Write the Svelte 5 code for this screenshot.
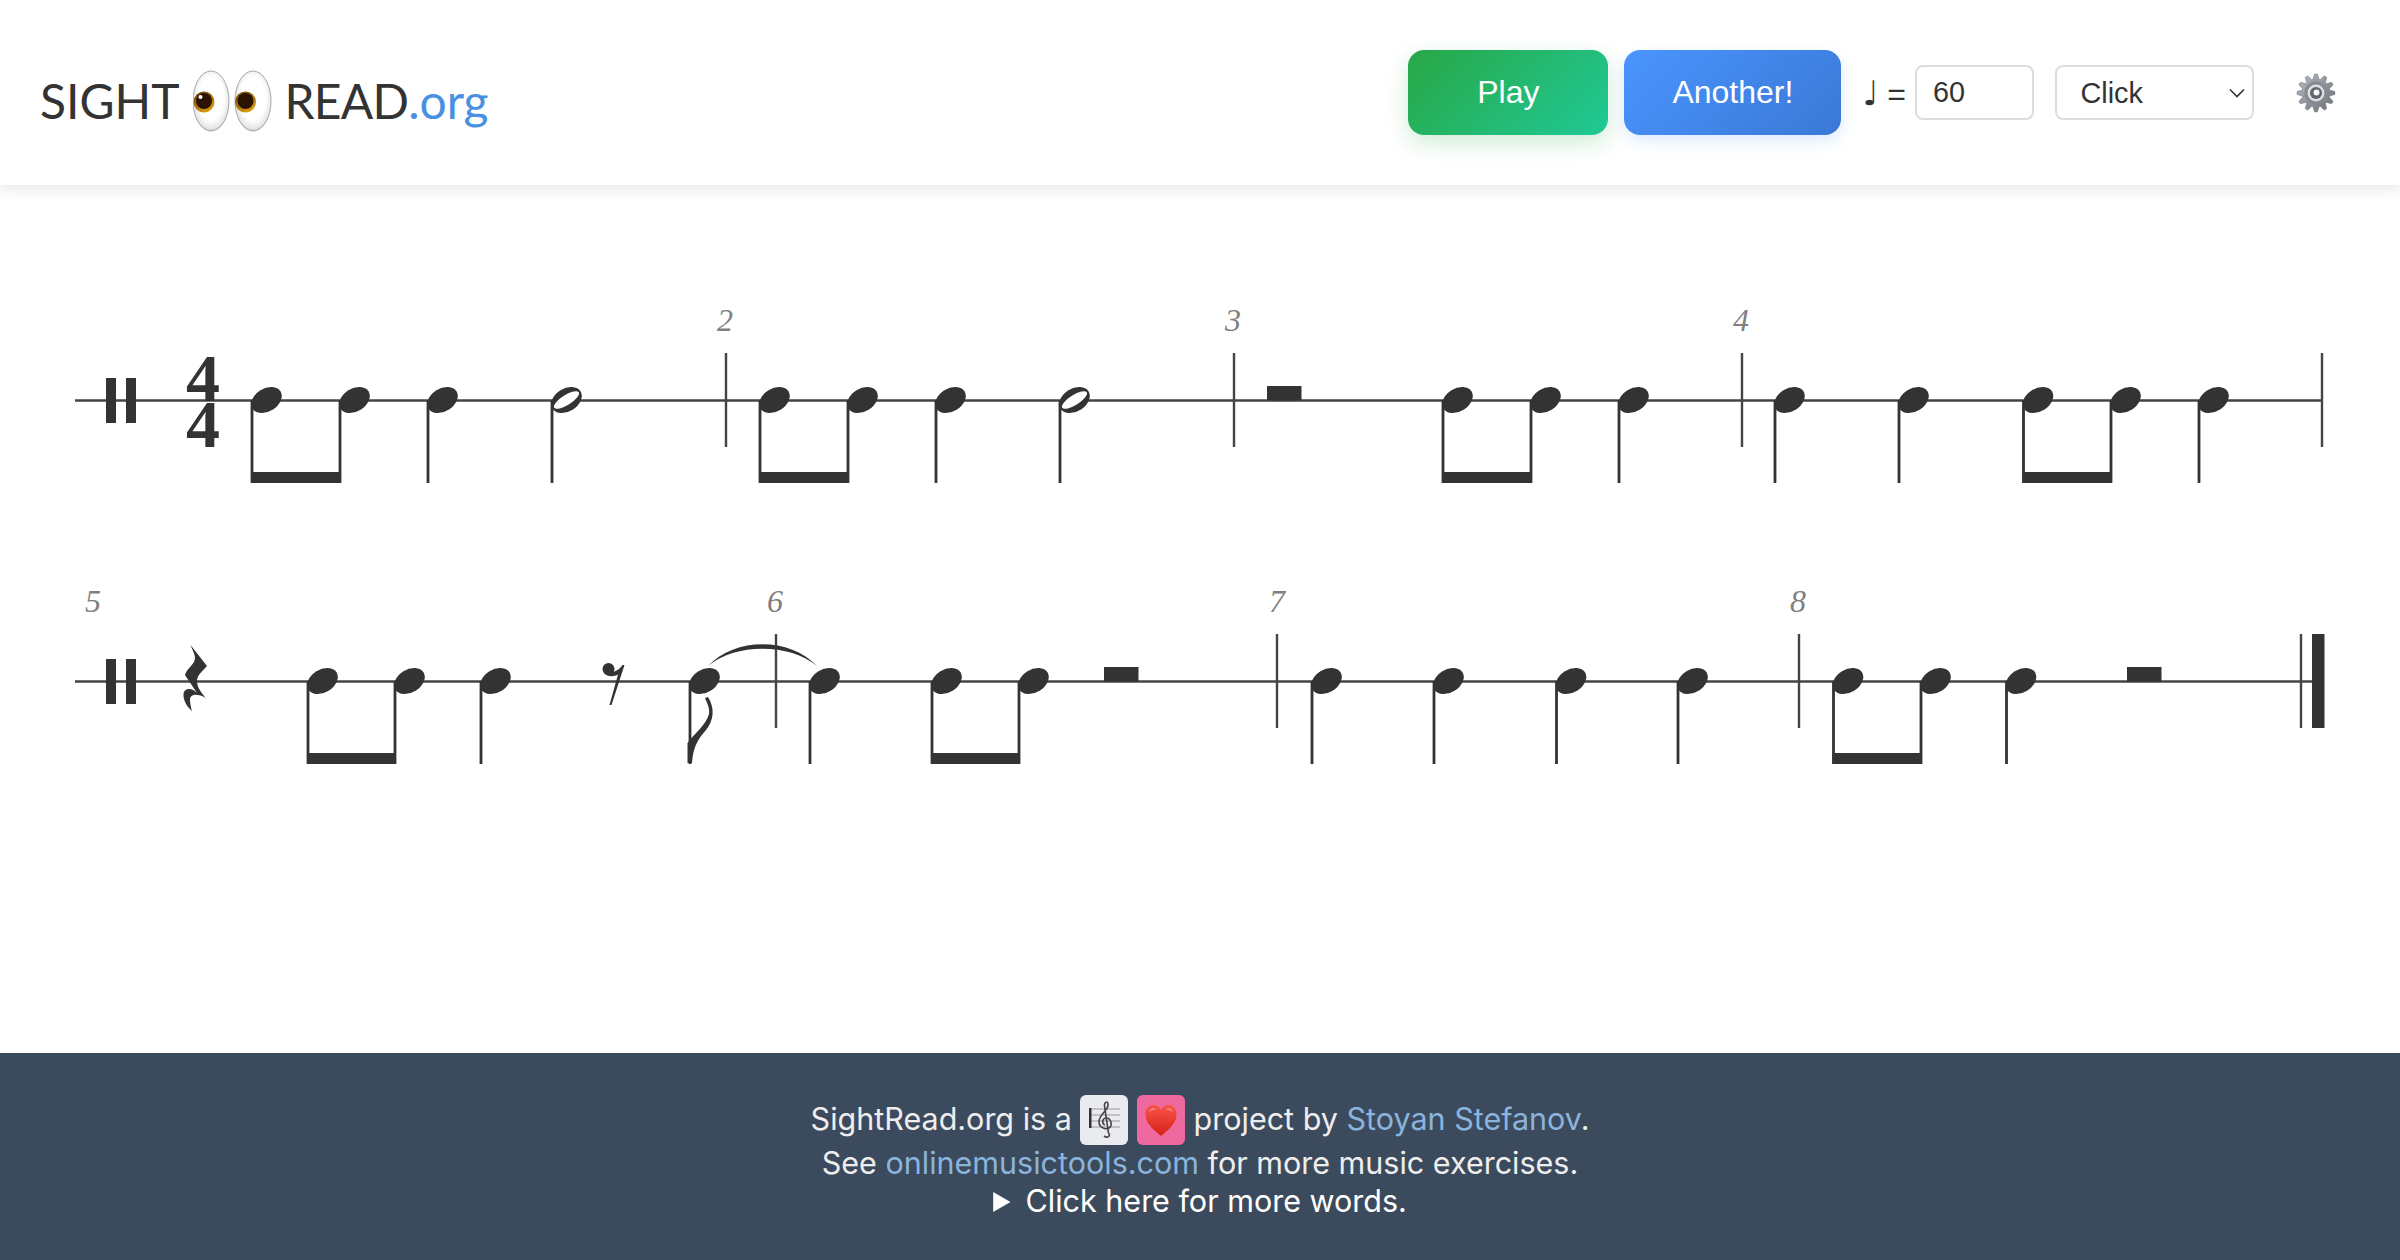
<script>
  const lineA = 400.5, lineB = 681.5;
  const STEM_BOTTOM = 82.5;
  const rows = [
    { y: lineA, end: 2322, start: 75,
      bars: [726, 1234, 1742, 2322],
      nums: [['2', 725], ['3', 1233], ['4', 1741]],
      stems: [252, 340, 428, 760, 848, 936, 1443, 1531, 1619, 1775, 1899, 2023.5, 2111, 2199],
      halves: [552, 1060],
      beams: [[252, 340], [760, 848], [1443, 1531], [2023.5, 2111]],
      rests: [1267] },
    { y: lineB, end: 2324, start: 75,
      bars: [776, 1277, 1799, 2301],
      nums: [['5', 93], ['6', 775], ['7', 1277], ['8', 1798]],
      stems: [308, 395, 481, 690, 810, 932, 1019, 1312, 1434, 1556.5, 1678, 1833.5, 1921, 2006.5],
      halves: [],
      beams: [[308, 395], [932, 1019], [1833.5, 1921]],
      rests: [1104, 2127] }
  ];

  function gearPath(cx, cy, outer, inner, teeth) {
    const step = (Math.PI * 2) / teeth;
    const pts = [];
    for (let i = 0; i < teeth; i++) {
      const a = i * step - Math.PI / 2;
      [[inner, -0.42], [outer, -0.14], [outer, 0.14], [inner, 0.42]].forEach(([r, k]) => {
        const t = a + k * step;
        pts.push((cx + r * Math.cos(t)).toFixed(2) + ' ' + (cy + r * Math.sin(t)).toFixed(2));
      });
    }
    return 'M' + pts.join('L') + 'Z';
  }
  const gear = gearPath(20, 20, 19, 14, 12);
</script>

<div class="page">
  <header class="top">
    <div class="logo">
      <span class="sight">SIGHT</span>
      <svg class="eyes" viewBox="0 0 80 62" width="80" height="62" aria-hidden="true">
        <defs>
          <radialGradient id="eyeWhite" cx="50%" cy="45%" r="60%">
            <stop offset="0.6" stop-color="#ffffff" />
            <stop offset="0.85" stop-color="#e6e6e6" />
            <stop offset="1" stop-color="#a0a0a0" />
          </radialGradient>
          <linearGradient id="iris" x1="0" y1="0" x2="0.6" y2="1">
            <stop offset="0" stop-color="#6a400c" />
            <stop offset="1" stop-color="#d99a10" />
          </linearGradient>
        </defs>
        <ellipse cx="18" cy="31" rx="18" ry="30" fill="url(#eyeWhite)" stroke="#a8a8a8" stroke-width="1" />
        <ellipse cx="60" cy="31" rx="18" ry="30" fill="url(#eyeWhite)" stroke="#a8a8a8" stroke-width="1" />
        <circle cx="11" cy="32" r="10.5" fill="url(#iris)" />
        <circle cx="11" cy="31" r="8" fill="#2c1200" />
        <circle cx="7.5" cy="27" r="2" fill="#fff" />
        <circle cx="52.5" cy="32" r="10.5" fill="url(#iris)" />
        <circle cx="52.5" cy="31" r="8" fill="#2c1200" />
      </svg>
      <span class="read">READ</span><span class="org">.org</span>
    </div>
    <div class="controls">
      <button class="btn play">Play</button>
      <button class="btn another">Another!</button>
      <span class="tempo"><span class="note">♩</span> =</span>
      <input class="bpm" type="text" value="60" />
      <div class="selwrap">
        <select class="sound"><option>Click</option></select>
        <svg class="chev" viewBox="0 0 16 10" width="16" height="10" aria-hidden="true"><path d="M1 1.5 L8 8.5 L15 1.5" fill="none" stroke="#333" stroke-width="1.6" /></svg>
      </div>
      <svg class="gear" viewBox="0 0 40 40" width="40" height="40" aria-hidden="true">
        <defs>
          <linearGradient id="gearG" x1="0" y1="0" x2="1" y2="1">
            <stop offset="0" stop-color="#b4bac1" />
            <stop offset="1" stop-color="#6b7077" />
          </linearGradient>
        </defs>
        <path d={gear} fill="url(#gearG)" stroke="#7d8289" stroke-width="0.6" stroke-linejoin="round" />
        <circle cx="20" cy="20" r="11.500" fill="#858a91" />
        <circle cx="20" cy="20" r="8.500" fill="#dcdfe2" />
        <circle cx="20" cy="20" r="6" fill="#5f6469" />
        <circle cx="20.500" cy="19.500" r="3" fill="#f4f6f7" />
      </svg>
    </div>
  </header>

  <main class="score">
    <svg class="sheet" viewBox="0 185 2400 868" width="2400" height="868">
      {#each rows as row}
        <line x1={row.start} x2={row.end} y1={row.y} y2={row.y} class="staff" />
        <rect x="106" y={row.y - 22.5} width="10" height="45" class="ink" />
        <rect x="126" y={row.y - 22.5} width="10" height="45" class="ink" />
        {#each row.bars as b}
          <line x1={b} x2={b} y1={row.y - 47.5} y2={row.y + 46.5} class="bar" />
        {/each}
        {#each row.nums as n}
          <text x={n[1]} y={row.y - 70} class="num">{n[0]}</text>
        {/each}
        {#each row.stems as s}
          <line x1={s} x2={s} y1={row.y} y2={row.y + STEM_BOTTOM} class="stem" />
          <ellipse cx={s + 14.5} cy={row.y - 0.5} rx="16.5" ry="11.5" class="ink" transform="rotate(-32 {s + 14.5} {row.y - 0.5})" />
        {/each}
        {#each row.halves as s}
          <line x1={s} x2={s} y1={row.y} y2={row.y + STEM_BOTTOM} class="stem" />
          <ellipse cx={s + 14.5} cy={row.y - 0.5} rx="16.5" ry="11.5" class="ink" transform="rotate(-32 {s + 14.5} {row.y - 0.5})" />
          <ellipse cx={s + 14.5} cy={row.y - 0.5} rx="14.5" ry="5" fill="#fff" transform="rotate(-32 {s + 14.5} {row.y - 0.5})" />
        {/each}
        {#each row.beams as b}
          <rect x={b[0] - 1} y={row.y + 71.5} width={b[1] - b[0] + 2} height="11" class="ink" />
        {/each}
        {#each row.rests as r}
          <rect x={r} y={row.y - 14.5} width="34.5" height="14.5" class="ink" />
        {/each}
      {/each}

      <text x="203" y="401" class="time">4</text>
      <text x="203" y="447" class="time">4</text>

      <path class="ink" d="M190.5 645 L207 666 C202 672 197 675 197 681 C197 688 202 693 205.5 698 C199 694 190 693 190 700 C190 703 191 708 192 711 C187 707 183 700 183.5 694 C184 688 192 687 197 693 L185 675 C187 668 195 664 195 658 C195 654 192 649 190.5 645 Z" />
      <circle class="ink" cx="608.5" cy="669" r="6" />
      <path class="ink" d="M624.5 665 L611.5 705 L609.5 705 L618 674.5 C613.5 677 606 677 603.5 672 L606 669 C609 673 616 674 622.5 665 Z" />
      <path class="ink" d="M708 666 C735 637 790 637 817 666 C790 643 735 643 708 666 Z" />
      <path class="ink" d="M705 698 L708 697 C715 708 714 720 706 730 C700 737 693 745 692 763 L687.5 763 L687.5 743 C695 733 706 725 709 714 C710 708 707 703 705 698 Z" />
      <rect x="2312" y="634" width="12.5" height="94" class="ink" />
    </svg>
  </main>

  <footer class="foot">
    <div class="l1">SightRead.org is a
      <svg class="tile" viewBox="0 0 48 50" width="48" height="50" aria-hidden="true">
        <rect width="48" height="50" rx="6" fill="#e9ebee" />
        <g stroke="#9a9a9a" stroke-width="1">
          <line x1="9" x2="40" y1="14" y2="14" />
          <line x1="9" x2="40" y1="20" y2="20" />
          <line x1="9" x2="40" y1="26" y2="26" />
          <line x1="9" x2="40" y1="32" y2="32" />
        </g>
        <rect x="9" y="13" width="2.5" height="20" fill="#333" />
        <path d="M24 41 C28 44 31 40 28.5 38 L24.5 11 C24 7 28 5 28 10 C28.5 15 19 19 19 27 C19 32 25 35 29 33 C33 31 31 23 26.5 23 C22 23 21.5 29 25 30" fill="none" stroke="#444" stroke-width="1.6" />
      </svg>
      <svg class="tile" viewBox="0 0 48 50" width="48" height="50" aria-hidden="true">
        <defs>
          <linearGradient id="heartG" x1="0" y1="0" x2="0" y2="1">
            <stop offset="0" stop-color="#f6564a" />
            <stop offset="1" stop-color="#d81f16" />
          </linearGradient>
        </defs>
        <rect width="48" height="50" rx="6" fill="#ee6a9e" />
        <path d="M24 41 C14 33 8.500 27 8.500 19.500 C8.500 13 12.500 10 16.500 10 C20 10 22.500 12 24 14.500 C25.500 12 28 10 31.500 10 C35.500 10 39.500 13 39.500 19.500 C39.500 27 34 33 24 41 Z" fill="url(#heartG)" />
        <path d="M12 17 C13 13.500 17 12.500 20 14.500 C16.500 14 14 15 12 17 Z M28 14.500 C31 12.500 35 13.500 36 17 C34 15 31.500 14 28 14.500 Z" fill="#ffb0a8" />
      </svg>
      project by <a href="#top">Stoyan Stefanov</a>.
    </div>
    <div class="l2">See <a href="#top">onlinemusictools.com</a> for more music exercises.</div>
    <details class="more"><summary>Click here for more words.</summary></details>
  </footer>
</div>

<style>
  :global(body) { margin: 0; background: #fff; }
  .page {
    min-height: 1260px;
    display: flex;
    flex-direction: column;
    font-family: "Liberation Sans", Arial, sans-serif;
    color: #333;
  }
  .top {
    height: 185px;
    box-sizing: border-box;
    display: flex;
    align-items: center;
    justify-content: space-between;
    padding: 0 64px 0 40px;
    background: #fff;
    box-shadow: 0 4px 14px rgba(0, 0, 0, 0.1);
    position: relative;
    z-index: 1;
  }
  .logo {
    display: flex;
    align-items: baseline;
    box-sizing: border-box;
    height: 62px;
    padding-top: 7px;
    margin-top: 17px;
    font-family: Lato, sans-serif;
    font-size: 48px;
    color: #333;
    line-height: 1;
  }
  .eyes { align-self: flex-start; margin: -7px 12px 0 13px; }
  .read { letter-spacing: -0.8px; }
  .org { color: #4a90e2; font-size: 48px; }
  .controls { display: flex; align-items: center; }
  .btn {
    height: 85px;
    border: 0;
    border-radius: 16px;
    color: #fff;
    font: 32px "Liberation Sans", Arial, sans-serif;
    cursor: pointer;
    padding: 0;
  }
  .play {
    width: 200px;
    margin-right: 16px;
    background: linear-gradient(135deg, #28a745, #20c997);
    box-shadow: 0 8px 22px rgba(40, 167, 69, 0.22);
  }
  .another {
    width: 217px;
    margin-right: 21px;
    background: linear-gradient(135deg, #4a95ff, #3a78d5);
    box-shadow: 0 6px 16px rgba(74, 144, 255, 0.18);
  }
  .tempo {
    font-size: 32px;
    margin-right: 9px;
    white-space: nowrap;
  }
  .note { font-family: "DejaVu Sans", sans-serif; font-size: 34px; }
  .bpm {
    width: 119px;
    height: 55px;
    box-sizing: border-box;
    border: 2px solid #ddd;
    border-radius: 8px;
    padding: 0 16px;
    font: 28.8px "Liberation Sans", Arial, sans-serif;
    color: #333;
    margin-right: 20.5px;
  }
  .selwrap { position: relative; margin-right: 42.5px; }
  .sound {
    width: 199px;
    height: 55px;
    box-sizing: border-box;
    display: block;
    appearance: none;
    background: #fff;
    border: 2px solid #ddd;
    border-radius: 8px;
    padding: 0 24px;
    font: 28.8px "Liberation Sans", Arial, sans-serif;
    color: #333;
  }
  .chev { position: absolute; right: 9px; top: 23px; pointer-events: none; }
  .gear { display: block; }
  .score { flex: 1; display: flex; }
  .sheet { display: block; }
  .staff { stroke: #444; stroke-width: 2.4; }
  .bar { stroke: #444; stroke-width: 2.4; }
  .stem { stroke: #333; stroke-width: 2.8; }
  .ink { fill: #333; }
  .num {
    font-family: "Liberation Serif", serif;
    font-style: italic;
    font-size: 32px;
    fill: #808080;
    text-anchor: middle;
  }
  .time {
    font-family: "Liberation Serif", serif;
    font-weight: 700;
    font-size: 68px;
    fill: #333;
    text-anchor: middle;
  }
  .foot {
    height: 207px;
    box-sizing: border-box;
    background: #3c4a5d;
    color: #eee;
    text-align: center;
    padding-top: 39px;
    font-family: Inter, "Liberation Sans", sans-serif;
    font-size: 30.5px;
    line-height: 38px;
  }
  .foot a { color: #8ab4dc; text-decoration: none; }
  .l1 { line-height: 54px; height: 52px; }
  .tile { vertical-align: middle; margin-top: -4px; }
  .l2 { line-height: 38px; }
  .more { color: #fff; }
  .more summary { cursor: pointer; }
</style>
